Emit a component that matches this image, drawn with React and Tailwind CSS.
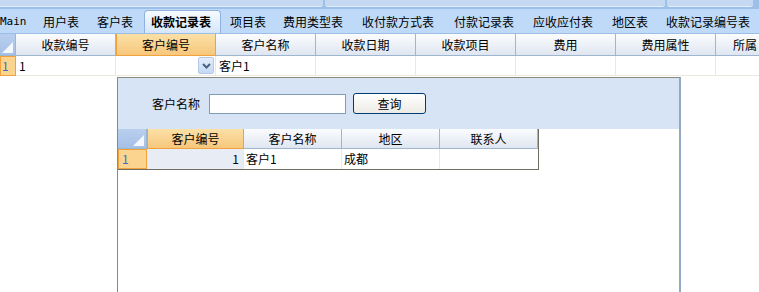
import React from "react";

// tab label + the width each slot takes in the strip
const tabs = [
  ["用户表", "w-[54px]"],
  ["客户表", "w-[54px]"],
  ["收款记录表", ""],
  ["项目表", "w-[53px]"],
  ["费用类型表", "w-[79px]"],
  ["收付款方式表", "w-[92px]"],
  ["付款记录表", "w-[79px]"],
  ["应收应付表", "w-[79px]"],
  ["地区表", "w-[54px]"],
  ["收款记录编号表", "w-[90px]"],
];

const mainCols = ["收款编号", "客户编号", "客户名称", "收款日期", "收款项目", "费用", "费用属性"];

const font = { fontFamily: '"Noto Sans CJK SC", "Liberation Sans", sans-serif' };

function Corner({ w }) {
  return (
    <div
      className={`relative h-full shrink-0 bg-gradient-to-b from-[#b9cfee] to-[#a5c0e6] border-r border-b border-[#9eb6ce] ${w}`}
    >
      <svg className="absolute right-[2px] bottom-[2px]" width="11" height="11" viewBox="0 0 11 11">
        <polygon points="11,0 11,11 0,11" fill="#f4f8fd" />
      </svg>
    </div>
  );
}

function HeadCell({ label, active, w, extra = "justify-center" }) {
  return (
    <div
      className={`h-full shrink-0 flex items-center text-[12px] text-black border-r border-b ${extra} ${w} ${
        active
          ? "bg-gradient-to-b from-[#fbe0a6] to-[#f6c77c] border-[#f2a23c] border-l border-l-[#f2a23c]"
          : "bg-gradient-to-b from-[#fbfcfe] to-[#dfe6f1] border-[#9eb6ce]"
      }`}
    >
      {label}
    </div>
  );
}

export default function App() {
  return (
    <div className="w-[759px] h-[292px] overflow-hidden bg-white relative" style={font}>
      {/* ribbon remains */}
      <div className="h-[9px] bg-[#9ebfe8] flex gap-[2px] pb-[2px]">
        <div className="w-[323px] bg-[#c5daf2] border-b border-[#e3eefb] rounded-br-[3px]" />
        <div className="w-[340px] bg-[#c5daf2] border-b border-[#e3eefb] rounded-b-[3px]" />
        <div className="w-[86px] bg-[#c5daf2] border-b border-[#e3eefb] rounded-b-[3px]" />
      </div>

      {/* tab strip */}
      <div className="h-[25px] bg-[#bfdaf8] flex items-end border-b border-[#9cbde6] text-[12px] text-black whitespace-nowrap">
        <div
          className="w-[43px] shrink-0 h-[22px] flex items-center text-[11px]"
          style={{ fontFamily: '"DejaVu Sans Mono", monospace' }}
        >
          Main
        </div>
        {tabs.map(([t, w]) =>
          t === "收款记录表" ? (
            <div
              key={t}
              className="w-[77px] shrink-0 h-[23px] flex items-center pl-[6px] -ml-[7px] mr-[9px] font-bold bg-gradient-to-b from-[#f7fbff] to-[#d6e6fa] border border-b-0 border-[#8fb1dc] rounded-t-[4px]"
            >
              {t}
            </div>
          ) : (
            <div key={t} className={`${w} shrink-0 h-[22px] flex items-center`}>
              {t}
            </div>
          )
        )}
      </div>

      {/* main grid header */}
      <div className="h-[22px] flex">
        <Corner w="w-[16px]" />
        {mainCols.map((c, i) => (
          <HeadCell key={c} label={c} active={i === 1} w="w-[100px]" />
        ))}
        <HeadCell label="所属" w="w-[100px]" extra="justify-start pl-[17px]" />
      </div>
      {/* main grid row */}
      <div className="h-[20px] flex text-[12px]">
        <div className="w-[16px] shrink-0 bg-[#fbd48f] border border-[#f2a23c] text-[#3a6fc4] flex items-center pl-[1px]">
          1
        </div>
        <div className="w-[100px] shrink-0 border-r border-b border-[#ebe9de] flex items-center px-[3px]">1</div>
        <div className="w-[100px] shrink-0 border-r border-b border-[#ebe9de] flex items-center justify-end pr-[1px]">
          <div className="w-[16px] h-[17px] border border-[#b3c8e8] bg-gradient-to-b from-[#e3edfc] to-[#c5d8f5] rounded-[2px] flex items-center justify-center">
            <svg width="9" height="6" viewBox="0 0 9 6">
              <path d="M1 1 L4.5 4.5 L8 1" stroke="#4d6185" strokeWidth="2" fill="none" />
            </svg>
          </div>
        </div>
        <div className="w-[100px] shrink-0 border-r border-b border-[#ebe9de] flex items-center px-[3px]">客户1</div>
        {[0, 1, 2, 3, 4].map((i) => (
          <div key={i} className="w-[100px] shrink-0 border-r border-b border-[#ebe9de]" />
        ))}
      </div>

      {/* drop-down popup */}
      <div className="ml-[117px] mt-[1px] w-[564px] h-[220px] border-l border-t border-t-[#8c8a7c] border-l-[#8c8a7c] border-r-2 border-r-[#93a8c4] flex flex-col">
        <div className="h-[51px] bg-[#d6e4f6] flex items-center pl-[34px] text-[12px]">
          <span className="w-[57px]">客户名称</span>
          <div className="w-[137px] h-[20px] bg-white border border-[#7f9db9]" />
          <button className="ml-[7px] w-[73px] h-[21px] rounded-[3px] border border-[#003c74] bg-gradient-to-b from-[#ffffff] to-[#ecebe5] text-[12px] flex items-center justify-center">
            查询
          </button>
        </div>
        <div className="w-[421px] border-r border-b border-[#716f64]">
          <div className="h-[20px] flex">
            <Corner w="w-[29px]" />
            <HeadCell label="客户编号" active w="w-[97px]" />
            <HeadCell label="客户名称" w="w-[98px]" />
            <HeadCell label="地区" w="w-[98px]" />
            <HeadCell label="联系人" w="w-[98px]" />
          </div>
          <div className="h-[20px] flex text-[12px]">
            <div className="w-[29px] shrink-0 bg-[#fbd48f] border border-[#f2a23c] text-[#3a6fc4] flex items-center pl-[3px]">
              1
            </div>
            <div className="w-[97px] shrink-0 bg-[#e8edf5] border-r border-[#ebe9de] flex items-center justify-end pr-[4px]">1</div>
            <div className="w-[98px] shrink-0 border-r border-[#ebe9de] flex items-center px-[2px]">客户1</div>
            <div className="w-[98px] shrink-0 border-r border-[#ebe9de] flex items-center px-[2px]">成都</div>
            <div className="w-[97px] shrink-0" />
          </div>
        </div>
        <div className="flex-1 bg-white" />
      </div>
    </div>
  );
}
